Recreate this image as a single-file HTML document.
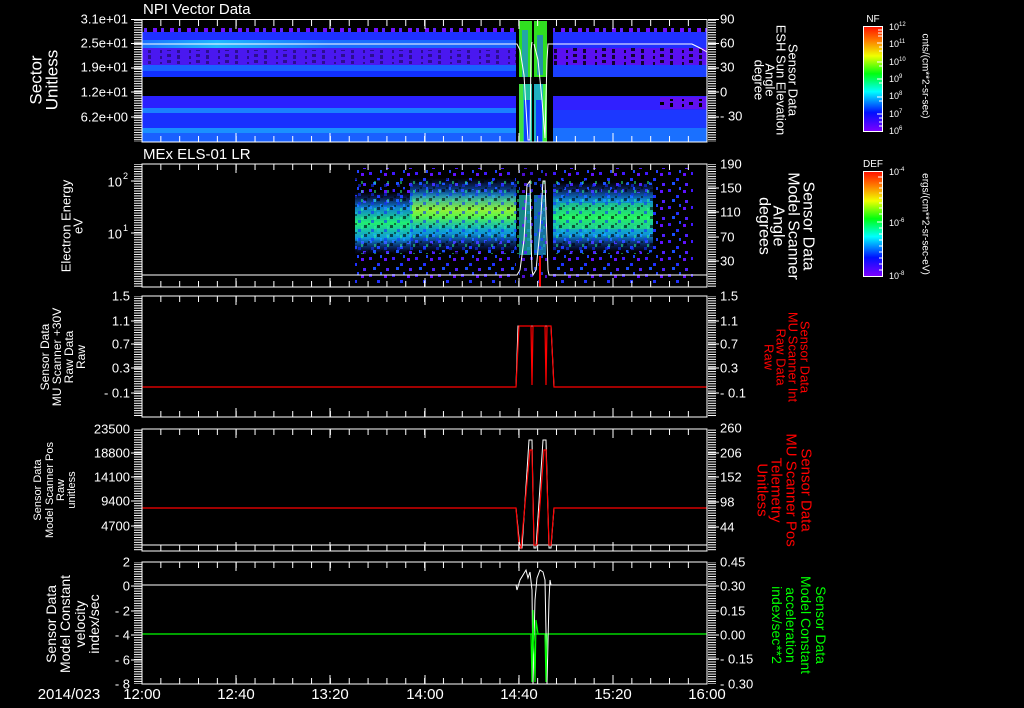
<!DOCTYPE html>
<html><head><meta charset="utf-8"><style>
html,body{margin:0;padding:0;background:#000;width:1024px;height:708px;overflow:hidden}
svg{display:block}
text{font-family:"Liberation Sans",sans-serif;fill:#fff}
</style></head><body>
<svg width="1024" height="708" viewBox="0 0 1024 708" xmlns="http://www.w3.org/2000/svg">
<defs>
<pattern id="ytk" width="10" height="2.44" patternUnits="userSpaceOnUse" y="0.2"><rect x="0" y="0" width="10" height="1" fill="#fff"/></pattern>
<pattern id="xtk" width="18.84" height="6" patternUnits="userSpaceOnUse" x="141.5"><rect x="0" y="0" width="1" height="6" fill="#fff"/></pattern>
<pattern id="spk" width="23" height="17" patternUnits="userSpaceOnUse">
<rect x="1" y="2" width="3" height="3" fill="#4018ff"/><rect x="9" y="8" width="3" height="3" fill="#2030ff"/><rect x="16" y="3" width="3" height="3" fill="#6010ff"/><rect x="5" y="12" width="3" height="3" fill="#1a50ff"/><rect x="18" y="13" width="3" height="3" fill="#5020ff"/><rect x="12" y="0" width="2" height="3" fill="#2040ff"/>
</pattern>
<pattern id="spk2" width="11" height="7" patternUnits="userSpaceOnUse">
<rect x="1" y="1" width="3" height="3" fill="#00d0ff"/><rect x="6" y="4" width="3" height="3" fill="#20a0ff"/><rect x="8" y="0" width="2" height="2" fill="#40ff80"/>
</pattern>
<pattern id="blk" width="13" height="9" patternUnits="userSpaceOnUse">
<rect x="0" y="0" width="3" height="3" fill="#000" opacity="0.6"/><rect x="7" y="4" width="3" height="3" fill="#1030ff" opacity="0.6"/><rect x="4" y="7" width="2" height="2" fill="#000" opacity="0.5"/><rect x="10" y="1" width="2" height="3" fill="#30ff90" opacity="0.5"/>
</pattern>
<pattern id="pspk" width="17" height="4" patternUnits="userSpaceOnUse"><rect x="0" y="0" width="4" height="4" fill="#7010ff"/><rect x="8" y="0" width="3" height="4" fill="#6020ff"/></pattern>
<pattern id="dspk" width="29" height="6" patternUnits="userSpaceOnUse"><rect x="3" y="1" width="3" height="4" fill="#000"/><rect x="15" y="2" width="2" height="3" fill="#000"/><rect x="22" y="0" width="4" height="3" fill="#000"/></pattern>
<linearGradient id="cb" x1="0" y1="0" x2="0" y2="1">
<stop offset="0" stop-color="#ff1000"/><stop offset="0.12" stop-color="#ff7000"/><stop offset="0.28" stop-color="#f0ff00"/><stop offset="0.45" stop-color="#00ff10"/><stop offset="0.62" stop-color="#00ffff"/><stop offset="0.82" stop-color="#0010ff"/><stop offset="1" stop-color="#8000ff"/>
</linearGradient>
<linearGradient id="band2" x1="0" y1="0" x2="0" y2="1">
<stop offset="0" stop-color="#2040ff" stop-opacity="0"/><stop offset="0.25" stop-color="#10a0ff" stop-opacity="0.8"/><stop offset="0.5" stop-color="#20f070"/><stop offset="0.75" stop-color="#10b0ff" stop-opacity="0.85"/><stop offset="1" stop-color="#2030ff" stop-opacity="0"/>
</linearGradient>
<linearGradient id="yel" x1="0" y1="0" x2="0" y2="1">
<stop offset="0" stop-color="#a0ff20" stop-opacity="0"/><stop offset="0.5" stop-color="#c8ff10"/><stop offset="1" stop-color="#60ff30" stop-opacity="0"/>
</linearGradient>
<linearGradient id="hl" x1="0" y1="0" x2="1" y2="0">
<stop offset="0" stop-color="#1a70ff"/><stop offset="0.2" stop-color="#20b8ff"/><stop offset="0.5" stop-color="#1a70ff"/><stop offset="1" stop-color="#1a60ff"/>
</linearGradient>
</defs>

<!-- ===== Panel 1 heatmap ===== -->
<g>
<rect x="142" y="28" width="374" height="4" fill="url(#pspk)"/>
<rect x="553" y="28" width="154" height="4" fill="url(#pspk)"/>
<rect x="142" y="32" width="374" height="9" fill="#1e30ff"/>
<rect x="142" y="40" width="374" height="8" fill="url(#hl)"/>
<rect x="142" y="48" width="374" height="17" fill="#4a18f0"/>
<rect x="142" y="50" width="374" height="14" fill="url(#dspk)" opacity="0.4"/>
<rect x="142" y="65" width="374" height="6" fill="#1a60ff"/>
<rect x="142" y="71" width="374" height="6" fill="#1030ff"/>
<rect x="142" y="96" width="374" height="12" fill="#2a20ff"/>
<rect x="142" y="108" width="374" height="5" fill="#1a80ff"/>
<rect x="142" y="113" width="374" height="15" fill="#1830ff"/>
<rect x="142" y="128" width="374" height="5" fill="#1a90ff"/>
<rect x="142" y="133" width="374" height="9" fill="#1a60ff"/>
<rect x="553" y="32" width="154" height="16" fill="#2030ff"/>
<rect x="553" y="48" width="154" height="17" fill="#5a10f0"/>
<rect x="553" y="48" width="154" height="17" fill="url(#dspk)" opacity="0.8"/>
<rect x="553" y="65" width="154" height="12" fill="#1a40ff"/>
<rect x="553" y="96" width="154" height="14" fill="#3020ff"/>
<rect x="660" y="97" width="46" height="12" fill="#6010f0"/>
<rect x="660" y="99" width="46" height="8" fill="url(#dspk)"/>
<rect x="553" y="110" width="154" height="18" fill="#1c38ff"/>
<rect x="553" y="128" width="154" height="14" fill="#1a70ff"/>
<rect x="519" y="21" width="13" height="56" fill="#30e020"/>
<rect x="534" y="21" width="13" height="56" fill="#30e020"/>
<rect x="522" y="30" width="6" height="47" fill="#1a80ff" opacity="0.6"/>
<rect x="537" y="35" width="6" height="40" fill="#1a60ff" opacity="0.6"/>
<rect x="519" y="84" width="13" height="58" fill="#20c0a0"/>
<rect x="534" y="84" width="13" height="58" fill="#20b0c0"/>
<rect x="519" y="84" width="4" height="58" fill="#40e040"/>
<rect x="543" y="84" width="4" height="58" fill="#40f040"/>
<rect x="524" y="100" width="6" height="42" fill="#1040ff"/>
<rect x="536" y="100" width="6" height="42" fill="#1040ff"/>
<polyline points="142,44 517,44 520,50 524,75 528,140 530,140 531,50 532,42" fill="none" stroke="#fff" stroke-width="1"/>
<polyline points="534,44 538,60 542,100 545,138 547,60 548,44 692,44 700,48 707,52" fill="none" stroke="#fff" stroke-width="1"/>
</g>

<!-- ===== Panel 2 spectrogram ===== -->
<g>
<rect x="355" y="168" width="161" height="115" fill="url(#spk)"/>
<rect x="553" y="168" width="140" height="115" fill="url(#spk)"/>
<rect x="355" y="192" width="56" height="62" fill="url(#band2)"/>
<rect x="410" y="178" width="106" height="74" fill="url(#band2)"/>
<rect x="412" y="192" width="104" height="36" fill="url(#yel)" opacity="0.7"/>
<rect x="553" y="182" width="100" height="70" fill="url(#band2)"/>
<rect x="560" y="203" width="90" height="26" fill="#30ff40" opacity="0.35"/>
<rect x="355" y="178" width="298" height="76" fill="url(#blk)"/>
<rect x="519" y="195" width="12" height="60" fill="#20c0c0" opacity="0.7"/>
<rect x="534" y="195" width="12" height="60" fill="#20a0e0" opacity="0.7"/>
<rect x="519" y="168" width="28" height="115" fill="url(#spk)" opacity="0.8"/>
<polyline points="142,275 517,275 520,270 524,240 527,185 530,181 531,240 532,270 533,275 536,270 540,230 543,181 545,181 547,240 548,270 549,275 707,275" fill="none" stroke="#fff"/>
<line x1="540" y1="256" x2="540" y2="287" stroke="#ff0000" stroke-width="2"/>
</g>

<!-- ===== Panel 3 ===== -->
<polyline points="142,387 516,387 518,326 551,326 554,387 707,387" fill="none" stroke="#fff"/>
<polyline points="142,387 516,387 519,326 531,326 532,385 533,326 545,326 546,385 547,326 551,326 554,387 707,387" fill="none" stroke="#ff0000" stroke-width="1.2"/>

<!-- ===== Panel 4 ===== -->
<line x1="142" y1="545" x2="707" y2="545" stroke="#fff"/>
<polyline points="142,508 516,508 520,548 522,548 529,440 532,440 534,548 536,548 543,440 546,440 549,548 551,548 554,508 707,508" fill="none" stroke="#fff"/>
<polyline points="142,508 516,508 519,545 521,548 530,450 532,450 534,545 537,545 544,450 546,450 549,545 551,545 554,508 707,508" fill="none" stroke="#ff0000" stroke-width="1.2"/>

<!-- ===== Panel 5 ===== -->
<line x1="142" y1="634" x2="707" y2="634" stroke="#00ff00" stroke-width="1.2"/>
<line x1="142" y1="585" x2="707" y2="585" stroke="#fff"/>
<polyline points="516,585 517,590 520,580 523,575 526,570 528,578 530,572 532,590 533,684 535,600 537,578 540,570 543,572 545,580 547,684 549,600 550,580 551,585 707,585" fill="none" stroke="#fff"/>
<polyline points="531,634 532,682 533,610 535,682 536,620 538,634 545,634 546,682 547,634" fill="none" stroke="#00ff00" stroke-width="1.2"/>

<!-- ===== Frames ===== -->
<g fill="none" stroke="#fff" stroke-width="1">
<rect x="142" y="19.5" width="565" height="122.5"/>
<rect x="142" y="164" width="565" height="123"/>
<rect x="142" y="296" width="565" height="121"/>
<rect x="142" y="429" width="565" height="122"/>
<rect x="142" y="562" width="565" height="122"/>
</g>
<g>
<rect x="142" y="20" width="565" height="6" fill="url(#xtk)"/><rect x="142" y="136" width="565" height="6" fill="url(#xtk)"/>
<rect x="142" y="164" width="565" height="6" fill="url(#xtk)"/><rect x="142" y="281" width="565" height="6" fill="url(#xtk)"/>
<rect x="142" y="296" width="565" height="6" fill="url(#xtk)"/><rect x="142" y="411" width="565" height="6" fill="url(#xtk)"/>
<rect x="142" y="429" width="565" height="6" fill="url(#xtk)"/><rect x="142" y="545" width="565" height="6" fill="url(#xtk)"/>
<rect x="142" y="562" width="565" height="6" fill="url(#xtk)"/><rect x="142" y="678" width="565" height="6" fill="url(#xtk)"/>
<g stroke="#fff">
<path d="M236 20v9M330 20v9M425 20v9M519 20v9M613 20v9M236 142v-9M330 142v-9M425 142v-9M519 142v-9M613 142v-9"/>
<path d="M236 164v9M330 164v9M425 164v9M519 164v9M613 164v9M236 287v-9M330 287v-9M425 287v-9M519 287v-9M613 287v-9"/>
<path d="M236 296v9M330 296v9M425 296v9M519 296v9M613 296v9M236 417v-9M330 417v-9M425 417v-9M519 417v-9M613 417v-9"/>
<path d="M236 429v9M330 429v9M425 429v9M519 429v9M613 429v9M236 551v-9M330 551v-9M425 551v-9M519 551v-9M613 551v-9"/>
<path d="M236 562v9M330 562v9M425 562v9M519 562v9M613 562v9M236 684v-9M330 684v-9M425 684v-9M519 684v-9M613 684v-9"/>
</g>
</g>
<g>
<rect x="134" y="20" width="8" height="122" fill="url(#ytk)"/><rect x="708" y="20" width="8" height="122" fill="url(#ytk)"/>
<rect x="134" y="164" width="8" height="123" fill="url(#ytk)"/><rect x="708" y="164" width="8" height="123" fill="url(#ytk)"/>
<rect x="134" y="296" width="8" height="121" fill="url(#ytk)"/><rect x="708" y="296" width="8" height="121" fill="url(#ytk)"/>
<rect x="134" y="429" width="8" height="122" fill="url(#ytk)"/><rect x="708" y="429" width="8" height="122" fill="url(#ytk)"/>
<rect x="134" y="562" width="8" height="122" fill="url(#ytk)"/><rect x="708" y="562" width="8" height="122" fill="url(#ytk)"/>
<g stroke="#fff">
<path d="M131 19.5h11M131 43.5h11M131 68h11M131 92h11M131 117h11M708 19.5h11M708 43.5h11M708 68h11M708 92h11M708 117h11"/>
<path d="M131 181h11M131 233h11M708 188h11M708 212h11M708 237h11M708 261h11"/>
<path d="M131 321h11M131 344h11M131 368h11M131 393h11M708 321h11M708 344h11M708 368h11M708 393h11"/>
<path d="M131 453h11M131 477h11M131 501h11M131 526h11M708 453h11M708 477h11M708 502h11M708 527h11"/>
<path d="M131 586h11M131 611h11M131 635h11M131 660h11M708 586h11M708 611h11M708 635h11M708 659h11"/>
</g>
</g>

<text x="143" y="14" font-size="15">NPI Vector Data</text>
<text x="143" y="159" font-size="15">MEx ELS-01 LR</text>

<g font-size="13" text-anchor="end" dominant-baseline="central">
<text x="128" y="19">3.1e+01</text><text x="128" y="43">2.5e+01</text><text x="128" y="67">1.9e+01</text><text x="128" y="92">1.2e+01</text><text x="128" y="117">6.2e+00</text>
<text x="122" y="182">10</text><text x="128" y="176" font-size="9">2</text>
<text x="122" y="234">10</text><text x="128" y="228" font-size="9">1</text>
<text x="130" y="296">1.5</text><text x="130" y="321">1.1</text><text x="130" y="344">0.7</text><text x="130" y="368">0.3</text><text x="130" y="393">- 0.1</text>
<text x="130" y="429">23500</text><text x="130" y="453">18800</text><text x="130" y="477">14100</text><text x="130" y="501">9400</text><text x="130" y="526">4700</text>
<text x="130" y="562">2</text><text x="130" y="586">0</text><text x="130" y="611">- 2</text><text x="130" y="635">- 4</text><text x="130" y="660">- 6</text><text x="130" y="684">- 8</text>
</g>
<g font-size="13" dominant-baseline="central">
<text x="720" y="19">90</text><text x="720" y="43">60</text><text x="720" y="67">30</text><text x="720" y="92">0</text><text x="720" y="116">- 30</text>
<text x="720" y="164">190</text><text x="720" y="188">150</text><text x="720" y="212">110</text><text x="720" y="237">70</text><text x="720" y="261">30</text>
<text x="720" y="296">1.5</text><text x="720" y="321">1.1</text><text x="720" y="344">0.7</text><text x="720" y="368">0.3</text><text x="720" y="393">- 0.1</text>
<text x="720" y="428">260</text><text x="720" y="453">206</text><text x="720" y="477">152</text><text x="720" y="502">98</text><text x="720" y="527">44</text>
<text x="720" y="562">0.45</text><text x="720" y="586">0.30</text><text x="720" y="611">0.15</text><text x="720" y="635">0.00</text><text x="720" y="659">- 0.15</text><text x="720" y="684">- 0.30</text>
</g>

<g text-anchor="middle" dominant-baseline="central">
<text font-size="17" transform="translate(36,80) rotate(-90)">Sector</text>
<text font-size="17" transform="translate(52,80) rotate(-90)">Unitless</text>
<text font-size="13" transform="translate(66,226) rotate(-90)">Electron Energy</text>
<text font-size="13" transform="translate(78,226) rotate(-90)">eV</text>
<text font-size="12" transform="translate(45,357) rotate(-90)">Sensor Data</text>
<text font-size="12" transform="translate(57,357) rotate(-90)">MU Scanner +30V</text>
<text font-size="12" transform="translate(69,357) rotate(-90)">Raw Data</text>
<text font-size="12" transform="translate(81,357) rotate(-90)">Raw</text>
<text font-size="11" transform="translate(38,490) rotate(-90)">Sensor Data</text>
<text font-size="11" transform="translate(50,490) rotate(-90)">Model Scanner Pos</text>
<text font-size="11" transform="translate(61,490) rotate(-90)">Raw</text>
<text font-size="11" transform="translate(72,490) rotate(-90)">unitless</text>
<text font-size="14" transform="translate(51,624) rotate(-90)">Sensor Data</text>
<text font-size="14" transform="translate(65,624) rotate(-90)">Model Constant</text>
<text font-size="14" transform="translate(80,624) rotate(-90)">velocity</text>
<text font-size="14" transform="translate(94,624) rotate(-90)">index/sec</text>
</g>
<g text-anchor="middle" dominant-baseline="central">
<text font-size="13" transform="translate(793,80) rotate(90)">Sensor Data</text>
<text font-size="13" transform="translate(781,80) rotate(90)">ESH Sun Elevation</text>
<text font-size="13" transform="translate(770,80) rotate(90)">Angle</text>
<text font-size="13" transform="translate(759,80) rotate(90)">degree</text>
<text font-size="16" transform="translate(808,226) rotate(90)">Sensor Data</text>
<text font-size="16" transform="translate(793,226) rotate(90)">Model Scanner</text>
<text font-size="16" transform="translate(778,226) rotate(90)">Angle</text>
<text font-size="16" transform="translate(764,226) rotate(90)">degrees</text>
<text font-size="13" style="fill:#ff0000" transform="translate(805,357) rotate(90)">Sensor Data</text>
<text font-size="13" style="fill:#ff0000" transform="translate(793,357) rotate(90)">MU Scanner Int</text>
<text font-size="13" style="fill:#ff0000" transform="translate(781,357) rotate(90)">Raw Data</text>
<text font-size="13" style="fill:#ff0000" transform="translate(769,357) rotate(90)">Raw</text>
<text font-size="15" style="fill:#ff0000" transform="translate(806,490) rotate(90)">Sensor Data</text>
<text font-size="15" style="fill:#ff0000" transform="translate(791,490) rotate(90)">MU Scanner Pos</text>
<text font-size="15" style="fill:#ff0000" transform="translate(776,490) rotate(90)">Telemetry</text>
<text font-size="15" style="fill:#ff0000" transform="translate(762,490) rotate(90)">Unitless</text>
<text font-size="14" style="fill:#00ff00" transform="translate(821,625) rotate(90)">Sensor Data</text>
<text font-size="14" style="fill:#00ff00" transform="translate(806,625) rotate(90)">Model Constant</text>
<text font-size="14" style="fill:#00ff00" transform="translate(791,625) rotate(90)">acceleration</text>
<text font-size="14" style="fill:#00ff00" transform="translate(777,625) rotate(90)">index/sec**2</text>
</g>

<g>
<rect x="863.5" y="26.5" width="19" height="105" fill="url(#cb)" stroke="#fff"/>
<text x="873" y="22" font-size="10" text-anchor="middle">NF</text>
<path d="M878 30h5M878 33h5M878 36h5M877 43h6M879 47h4M879 51h4M877 62h6M879 66h4M877 79h6M879 83h4M877 97h6M879 101h4M877 114h6M879 118h4M879 122h4M879 126h4" stroke="#fff"/>
<g font-size="9">
<text x="889" y="30">10<tspan dy="-4" font-size="6">12</tspan></text>
<text x="889" y="47">10<tspan dy="-4" font-size="6">11</tspan></text>
<text x="889" y="65">10<tspan dy="-4" font-size="6">10</tspan></text>
<text x="889" y="82">10<tspan dy="-4" font-size="6">9</tspan></text>
<text x="889" y="99">10<tspan dy="-4" font-size="6">8</tspan></text>
<text x="889" y="117">10<tspan dy="-4" font-size="6">7</tspan></text>
<text x="889" y="134">10<tspan dy="-4" font-size="6">6</tspan></text>
</g>
<text font-size="10" text-anchor="middle" dominant-baseline="central" transform="translate(925,76) rotate(90)">cnts/(cm**2-sr-sec)</text>

<rect x="863.5" y="171.5" width="19" height="105" fill="url(#cb)" stroke="#fff"/>
<text x="873" y="167" font-size="10" text-anchor="middle">DEF</text>
<path d="M878 177h5M879 183h4M879 188h4M879 193h4M879 198h4M879 203h4M879 208h4M879 214h4M877 222h6M879 228h4M879 234h4M879 240h4M879 246h4M879 252h4M879 258h4M879 264h4M879 270h4" stroke="#fff"/>
<g font-size="9">
<text x="889" y="175">10<tspan dy="-4" font-size="6">-4</tspan></text>
<text x="889" y="226">10<tspan dy="-4" font-size="6">-6</tspan></text>
<text x="889" y="279">10<tspan dy="-4" font-size="6">-8</tspan></text>
</g>
<text font-size="10" text-anchor="middle" dominant-baseline="central" transform="translate(925,224) rotate(90)">ergs/(cm**2-sr-sec-eV)</text>
</g>

<g font-size="15" text-anchor="middle">
<text x="69" y="699">2014/023</text>
<text x="142" y="699">12:00</text><text x="236" y="699">12:40</text><text x="330" y="699">13:20</text><text x="425" y="699">14:00</text><text x="519" y="699">14:40</text><text x="613" y="699">15:20</text><text x="707" y="699">16:00</text>
</g>
</svg>
</body></html>
